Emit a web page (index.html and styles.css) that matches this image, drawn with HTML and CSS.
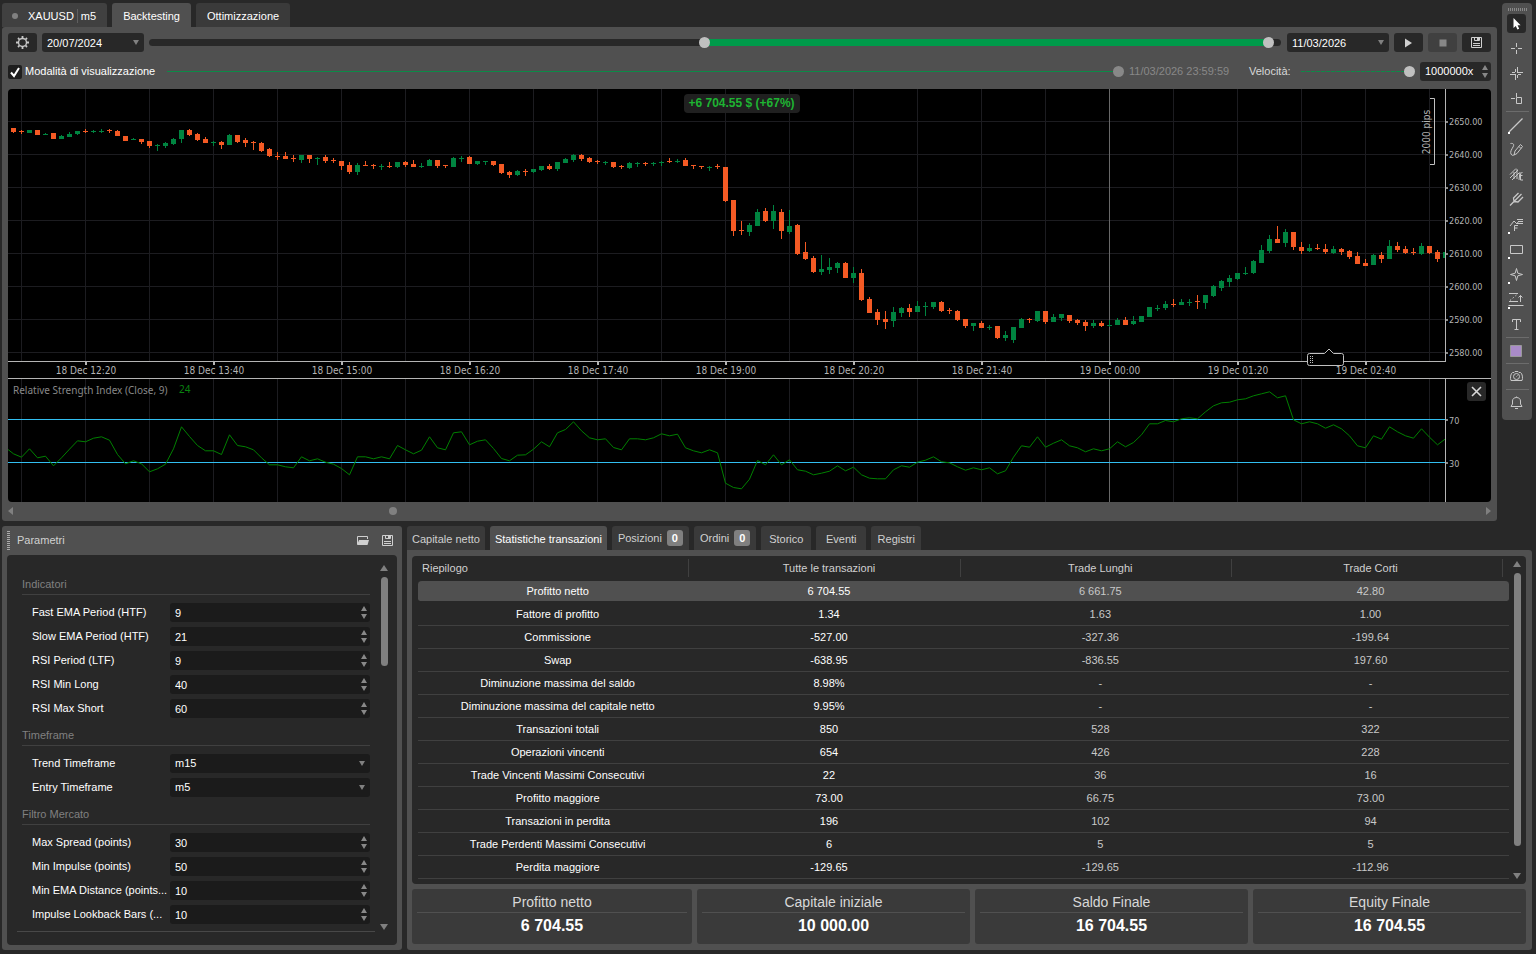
FILE: index.html
```html
<!DOCTYPE html>
<html lang="it">
<head>
<meta charset="utf-8">
<title>XAUUSD m5 - Backtesting</title>
<link rel="stylesheet" href="styles.css">
</head>
<body>
<div class="top">
  <main class="workspace">
    <nav class="tabs tabs-main">
      <button class="tab tab-symbol"><span class="dot"></span><span>XAUUSD</span><span class="bar"></span><span>m5</span></button>
      <button class="tab active">Backtesting</button>
      <button class="tab dim">Ottimizzazione</button>
    </nav>
    <section class="panel chart-panel">
      <div class="row">
        <button class="btn" aria-label="Impostazioni"><svg width="15" height="15" viewBox="0 0 15 15"><circle cx="7.5" cy="7.5" r="4" fill="none" stroke="#c8c8c8" stroke-width="1.4"/><path d="M7.5 1v2M7.5 12v2M1 7.5h2M12 7.5h2M3 3l1.300 1.300M10.700 10.700L12 12M3 12l1.300-1.300M10.700 4.300L12 3" stroke="#c8c8c8" stroke-width="1.800"/></svg></button>
        <span class="select wide-date"><select aria-label="Data iniziale"><option>20/07/2024</option></select></span>
        <div class="range-track">
          <input type="range" min="0" max="1000" value="491" aria-label="Inizio periodo">
          <input type="range" min="0" max="1000" value="994" aria-label="Fine periodo">
        </div>
        <span class="select wide-date"><select aria-label="Data finale"><option>11/03/2026</option></select></span>
        <button class="btn" aria-label="Avvia"><svg width="9" height="10" viewBox="0 0 9 10"><path d="M1 0.500L8 5L1 9.500z" fill="#d0d0d0"/></svg></button>
        <button class="btn off" aria-label="Ferma" disabled><svg width="8" height="8" viewBox="0 0 8 8"><path d="M0.500 0.500h7v7h-7z" fill="#888"/></svg></button>
        <button class="btn" aria-label="Salva"><svg width="11" height="11" viewBox="0 0 11 11"><path d="M.5 .5h10v10h-10zM3.500 .5v3h5v-3M2 6.500h7M2 8.500h7" fill="none" stroke="#d0d0d0"/><path d="M6 1h2v2H6z" fill="#d0d0d0"/></svg></button>
      </div>
      <div class="row row-view">
        <label class="check"><input type="checkbox" checked><svg width="14" height="14" viewBox="0 0 14 14"><path d="M3 7.500l3 3.500L11 3" fill="none" stroke="#fff" stroke-width="2"/></svg><span>Modalità di visualizzazione</span></label>
        <input class="line-range progress" type="range" min="0" max="100" value="100" disabled aria-label="Avanzamento">
        <span class="stamp">11/03/2026 23:59:59</span>
        <label class="speed-label" for="speed">Velocità:</label>
        <input class="line-range dashed" id="speed" type="range" min="0" max="100" value="100">
        <span class="spin speed"><input type="text" value="1000000x" aria-label="Moltiplicatore velocità"><i></i></span>
      </div>
      <div class="chart">
        <svg id="chart" viewBox="8 89 1483 413" role="img" aria-label="Grafico XAUUSD m5"></svg>
        <output class="profit">+6 704.55 $ (+67%)</output>
        <button class="close" aria-label="Chiudi indicatore"><svg width="11" height="11" viewBox="0 0 11 11"><path d="M1 1l9 9M10 1l-9 9" stroke="#d8d8d8" stroke-width="1.600"/></svg></button>
      </div>
      <div class="hscroll"><span class="arrow left"></span><span class="hthumb"></span><span class="arrow right"></span></div>
    </section>
  </main>
  <aside class="tools" id="tools" aria-label="Strumenti">
    <span class="grip-h"></span>
    <button class="tool on" aria-label="Cursore"><svg viewBox="0 0 30 25"><path d="M11.500 7v10l2.300-2 1.600 3.500 1.800-.8-1.600-3.400h3z" fill="#fff"/></svg></button>
    <button class="tool" aria-label="Croce"><svg viewBox="0 0 30 25"><path d="M9 12.500h4M16 12.500h4M14.500 7v4M14.500 14v4"/></svg></button>
    <button class="tool" aria-label="Croce sincronizzata"><svg viewBox="0 0 30 25"><path d="M8 13.500h5M16 11.500h5M13.500 13v6M15.500 6v6M10 11.500h3M16 13.500h3M13.500 8v3M15.500 14v3"/></svg></button>
    <button class="tool" aria-label="Misura"><svg viewBox="0 0 30 25"><path d="M9 12.500h4M14.500 7v4M14.500 11.500h5v6h-5z"/></svg></button>
    <hr>
    <button class="tool more" aria-label="Linea"><svg viewBox="0 0 30 25"><path d="M7 20L20.500 6.500" stroke-width="1.300"/></svg></button>
    <button class="tool" aria-label="Matita"><svg viewBox="0 0 30 25"><path d="M8.500 6.500c3-.5 4 1 2.500 3.500s-3 5-2 7 2.500 1.500 3.500.5M12 18l1-4 5.500-6.500 2 2L15 16.500zM17 9.500l2 2"/></svg></button>
    <button class="tool" aria-label="Disegni"><svg viewBox="0 0 30 25"><path d="M8 16l8-8M8 12.500l6-6M10 18l7-7M12 10v7M15 7v10M18 10l-1 8M17.500 13.500h3M20.500 10.500c-1.500 0-2 1-2 2.500v5h2.500"/></svg></button>
    <button class="tool bold" aria-label="Forcone"><svg viewBox="0 0 30 25"><path d="M8 18.500L19.500 7M12 14.500l-.5-3.500 5-5M12 14.500l4 .5 5-5"/></svg></button>
    <button class="tool more" aria-label="Fibonacci"><svg viewBox="0 0 30 25"><path d="M8 14l4-5 3 3 1-2M15 7.500h6M16 9.500h5M15 11.500h6M12.500 19v-5.500h3.500M12.500 16h3"/></svg></button>
    <button class="tool more" aria-label="Rettangolo"><svg viewBox="0 0 30 25"><path d="M8.500 8.500h12v8h-12z"/></svg></button>
    <button class="tool more" aria-label="Icona"><svg viewBox="0 0 30 25"><path d="M14.500 6.500l1.300 4.700 4.700 1.300-4.700 1.300-1.300 4.700-1.300-4.700-4.700-1.300 4.700-1.300z"/></svg></button>
    <button class="tool more" aria-label="Posizione"><svg viewBox="0 0 30 25"><path d="M7 6.500h9M7 14.500h9M6.500 18.500h15M18.500 15V8.500M16.500 10.500l2-2 2 2"/><path d="M8 13.500l7-6" stroke-dasharray="1.500 2"/></svg></button>
    <button class="tool" aria-label="Testo"><svg viewBox="0 0 30 25"><path d="M10.500 10V7.500h8V10M14.500 7.500v10M12.500 17.500h4"/></svg></button>
    <hr>
    <button class="tool" aria-label="Colore"><svg viewBox="0 0 30 25"><path d="M8.500 7.500h11v11h-11z" fill="#a98bc8" stroke="#999"/></svg></button>
    <hr>
    <button class="tool" aria-label="Istantanea"><svg viewBox="0 0 30 25"><path d="M10.500 8.500h1.500l1-1h3l1 1h1.500c2 1 2.500 6 1.500 8h-11c-1-2-.5-7 1.500-8z"/><circle cx="14.500" cy="12.500" r="3"/><path d="M14.500 12.500l1-1"/></svg></button>
    <hr>
    <button class="tool" aria-label="Avvisi"><svg viewBox="0 0 30 25"><path d="M9 16.500h11l-1.500-2.500v-3c0-2-1.500-3.500-4-3.500s-4 1.500-4 3.500v3zM14.500 7.500v-1M13 18.500h3"/></svg></button>
  </aside>
</div>

<div class="bottom">
  <section class="panel params">
    <header class="params-head"><span class="grip-v"></span><h2>Parametri</h2>
      <button class="plain" aria-label="Apri"><svg width="12" height="9" viewBox="0 0 12 9"><path d="M.5 8V.5h10V3" fill="none" stroke="#d0d0d0"/><path d="M2 4h10l-1.500 5H0z" fill="#d0d0d0"/></svg></button>
      <button class="plain" aria-label="Salva parametri"><svg width="11" height="11" viewBox="0 0 11 11"><path d="M.5 .5h10v10h-10zM3.500 .5v3h5v-3M2 6.500h7M2 8.500h7" fill="none" stroke="#d0d0d0"/><path d="M6 1h2v2H6z" fill="#d0d0d0"/></svg></button>
    </header>
    <div class="inset params-body">
      <form class="fields">
        <h3>Indicatori</h3>
        <div class="field"><label for="p1">Fast EMA Period (HTF)</label><span class="spin"><input id="p1" type="number" value="9"><i></i></span></div>
        <div class="field"><label for="p2">Slow EMA Period (HTF)</label><span class="spin"><input id="p2" type="number" value="21"><i></i></span></div>
        <div class="field"><label for="p3">RSI Period (LTF)</label><span class="spin"><input id="p3" type="number" value="9"><i></i></span></div>
        <div class="field"><label for="p4">RSI Min Long</label><span class="spin"><input id="p4" type="number" value="40"><i></i></span></div>
        <div class="field"><label for="p5">RSI Max Short</label><span class="spin"><input id="p5" type="number" value="60"><i></i></span></div>
        <h3>Timeframe</h3>
        <div class="field"><label for="p6">Trend Timeframe</label><span class="select"><select id="p6"><option>m15</option></select></span></div>
        <div class="field"><label for="p7">Entry Timeframe</label><span class="select"><select id="p7"><option>m5</option></select></span></div>
        <h3>Filtro Mercato</h3>
        <div class="field"><label for="p8">Max Spread (points)</label><span class="spin"><input id="p8" type="number" value="30"><i></i></span></div>
        <div class="field"><label for="p9">Min Impulse (points)</label><span class="spin"><input id="p9" type="number" value="50"><i></i></span></div>
        <div class="field"><label for="p10">Min EMA Distance (points...</label><span class="spin"><input id="p10" type="number" value="10"><i></i></span></div>
        <div class="field"><label for="p11">Impulse Lookback Bars (...</label><span class="spin"><input id="p11" type="number" value="10"><i></i></span></div>
      </form>
      <div class="vscroll"><span class="arrow up"></span><span class="vtrack"><b class="short"></b></span><span class="arrow down"></span></div>
    </div>
  </section>

  <section class="results">
    <nav class="tabs tabs-results">
      <button class="tab dim">Capitale netto</button>
      <button class="tab active">Statistiche transazioni</button>
      <button class="tab dim counted">Posizioni<span class="count">0</span></button>
      <button class="tab dim counted">Ordini<span class="count">0</span></button>
      <button class="tab dim">Storico</button>
      <button class="tab dim">Eventi</button>
      <button class="tab dim">Registri</button>
    </nav>
    <div class="panel results-body">
      <div class="inset table-box">
        <table>
          <thead><tr><th>Riepilogo</th><th>Tutte le transazioni</th><th>Trade Lunghi</th><th>Trade Corti</th></tr></thead>
          <tbody>
            <tr class="selected"><td>Profitto netto</td><td>6 704.55</td><td>6 661.75</td><td>42.80</td></tr>
            <tr><td>Fattore di profitto</td><td>1.34</td><td>1.63</td><td>1.00</td></tr>
            <tr><td>Commissione</td><td>-527.00</td><td>-327.36</td><td>-199.64</td></tr>
            <tr><td>Swap</td><td>-638.95</td><td>-836.55</td><td>197.60</td></tr>
            <tr><td>Diminuzione massima del saldo</td><td>8.98%</td><td>-</td><td>-</td></tr>
            <tr><td>Diminuzione massima del capitale netto</td><td>9.95%</td><td>-</td><td>-</td></tr>
            <tr><td>Transazioni totali</td><td>850</td><td>528</td><td>322</td></tr>
            <tr><td>Operazioni vincenti</td><td>654</td><td>426</td><td>228</td></tr>
            <tr><td>Trade Vincenti Massimi Consecutivi</td><td>22</td><td>36</td><td>16</td></tr>
            <tr><td>Profitto maggiore</td><td>73.00</td><td>66.75</td><td>73.00</td></tr>
            <tr><td>Transazioni in perdita</td><td>196</td><td>102</td><td>94</td></tr>
            <tr><td>Trade Perdenti Massimi Consecutivi</td><td>6</td><td>5</td><td>5</td></tr>
            <tr><td>Perdita maggiore</td><td>-129.65</td><td>-129.65</td><td>-112.96</td></tr>
          </tbody>
        </table>
        <div class="vscroll"><span class="arrow up"></span><span class="vtrack"><b class="long"></b></span><span class="arrow down"></span></div>
      </div>
      <div class="cards">
        <article><h4>Profitto netto</h4><p>6 704.55</p></article>
        <article><h4>Capitale iniziale</h4><p>10 000.00</p></article>
        <article><h4>Saldo Finale</h4><p>16 704.55</p></article>
        <article><h4>Equity Finale</h4><p>16 704.55</p></article>
      </div>
    </div>
  </section>
</div>
<script src="chart.js"></script>
</body>
</html>
```

FILE: styles.css
```css
* { box-sizing: border-box; }
body {
  margin: 0;
  min-height: 100vh;
  display: flex;
  flex-direction: column;
  gap: 5px;
  padding: 3px 4px 4px 2px;
  background: #282828;
  color: #fff;
  font-family: "Liberation Sans", Arial, sans-serif;
  font-size: 11px;
}
button, input, select { font: inherit; color: inherit; border: 0; margin: 0; padding: 0; background: none; }
button { display: flex; align-items: center; justify-content: center; }
h2, h3, h4, p { margin: 0; font-weight: normal; }

.top { display: flex; align-items: flex-start; gap: 5px; }
.workspace { flex: 1; min-width: 0; }
.panel { background: #505050; border-radius: 3px; }

.tabs { display: flex; gap: 5px; }
.tab { height: 24px; padding: 1px 5px 0; background: #404040; border-radius: 3px 3px 0 0; white-space: nowrap; }
.tab.dim { background: #3a3a3a; }
.tab.active { background: #505050; color: #fff; }
.tab.counted { padding: 0 6px; }
.tabs-main .tab { padding: 2px 11px 0; }
.tabs-main .tab-symbol { padding-left: 10px; gap: 3px; }
.dot { width: 6px; height: 6px; margin-right: 7px; border-radius: 3px; background: #808080; }
.bar { width: 1px; height: 14px; background: #606060; }
.tabs-results .tab { min-width: 50px; color: #d0d0d0; }
.tabs-results .tab.active { color: #fff; }
.count { min-width: 16px; margin-left: 5px; line-height: 16px; border-radius: 3px; background: #808080; color: #fff; font-weight: bold; }

.chart-panel { padding: 6px 6px 0; }
.row { display: flex; align-items: center; gap: 5px; height: 19px; }
.row-view { margin: 10px 0 8px; gap: 0; }
.btn { width: 29px; height: 19px; border-radius: 3px; background: #282828; }
.btn.off { background: #404040; }
.select, .spin { position: relative; display: flex; height: 19px; border-radius: 3px; background: #1b1b1b; }
.select select { appearance: none; width: 100%; padding: 0 14px 0 5px; outline: 0; }
.field .select select { padding-bottom: 2px; }
.select::after {
  content: "";
  position: absolute;
  right: 5px;
  top: 7px;
  border: solid transparent;
  border-width: 5px 3px 0;
  border-top-color: #808080;
  pointer-events: none;
}
.wide-date { width: 102px; background: #282828; }
.spin input { width: 100%; padding: 1px 14px 0 5px; outline: 0; appearance: textfield; }
.spin input::-webkit-inner-spin-button { appearance: none; }
.spin i { position: absolute; right: 4px; top: 3px; width: 5px; height: 13px; pointer-events: none; }
.spin i::before, .spin i::after { content: ""; display: block; border: solid transparent; border-width: 0 3px 5px; border-bottom-color: #888; }
.spin i::after { margin-top: 3px; border-width: 5px 3px 0; border-top-color: #888; }
.spin.speed { width: 71px; margin-left: 5px; background: #282828; }
.spin.speed input { padding: 0 14px 1px 5px; }

.range-track {
  position: relative;
  flex: 1;
  height: 7px;
  margin-right: 1px;
  border-radius: 4px;
  background: linear-gradient(90deg, #282828 49%, #009a4a 49%, #009a4a 99%, #282828 99%);
}
.range-track input { position: absolute; left: 0; top: -2px; width: 100%; height: 11px; appearance: none; pointer-events: none; }
input[type="range"] { appearance: none; background: none; outline: 0; }
input[type="range"]::-webkit-slider-thumb { appearance: none; width: 11px; height: 11px; border-radius: 6px; background: #c0c0c0; pointer-events: auto; }
input.line-range { height: 11px; background: linear-gradient(#0c8a48, #0c8a48) center / 100% 1px no-repeat; }
input.progress { flex: 1; margin: 0 5px 0 12px; }
input.progress::-webkit-slider-thumb { background: #888; }
input.dashed { width: 114px; margin-left: 11px; background: repeating-linear-gradient(90deg, #0c8a48 0 4px, #505050 4px 5px) center / 100% 1px no-repeat; }
.check { display: flex; align-items: center; gap: 3px; }
.check input { position: absolute; opacity: 0; }
.check svg { background: #1e1e1e; border-radius: 2px; }
.check span, .stamp, .speed-label { padding-bottom: 2px; }
.stamp { width: 98px; color: #888; white-space: nowrap; }
.speed-label { width: 41px; margin-left: 22px; color: #d8d8d8; }

.chart { position: relative; overflow: hidden; border-radius: 4px; background: #000; }
.chart > svg { display: block; width: 100%; height: auto; }
.profit { position: absolute; left: 50%; top: 5px; margin-left: -66px; padding: 0 5px; line-height: 19px; border-radius: 4px; background: #202020; color: #1eb432; font-size: 12px; font-weight: bold; white-space: nowrap; }
.close { position: absolute; right: 5px; top: 71%; width: 19px; height: 19px; border-radius: 3px; background: #282828; }
.axis-text { fill: #b4b4b4; font-family: "DejaVu Sans Condensed", "DejaVu Sans", sans-serif; font-size: 10px; }
.axis-text.price { font-size: 9px; }
.axis-text.name { fill: #888; font-family: "Noto Sans", sans-serif; }
.axis-text.value { fill: #0a8210; font-family: "Noto Sans", sans-serif; }

.hscroll { display: flex; align-items: center; height: 19px; padding-bottom: 2px; }
.hthumb { width: 8px; height: 8px; margin-left: calc(25% + 5px); margin-right: auto; border-radius: 4px; background: #808080; }
.arrow { border: solid transparent; border-width: 4px; }
.arrow.left { border-left-width: 0; border-right: 5px solid #808080; }
.arrow.right { border-right-width: 0; border-left: 5px solid #808080; }
.arrow.up { border-top-width: 0; border-bottom: 6px solid #808080; }
.arrow.down { border-bottom-width: 0; border-top: 6px solid #808080; }

.tools { display: flex; flex-direction: column; width: 30px; padding: 5px 0; border-radius: 4px; background: #505050; }
.tools hr { width: 23px; height: 1px; margin: 0 auto; border: 0; background: #6c6c6c; }
.grip-h { width: 19px; height: 3px; margin: 0 auto; background: repeating-linear-gradient(90deg, #888 0 1px, transparent 1px 2px); }
.tool { position: relative; width: 30px; height: 25px; }
.tool svg { position: relative; width: 30px; height: 25px; fill: none; stroke: #c8c8c8; }
.tool.bold svg { stroke-width: 1.3; }
.tool.on svg { stroke: none; }
.tool.on::before { content: ""; position: absolute; left: 5px; top: 3px; width: 19px; height: 19px; border-radius: 3px; background: #282828; }
.tool.more::after { content: ""; position: absolute; left: 6px; bottom: 3px; width: 2px; height: 2px; background: #fff; }

.bottom { flex: 1; display: flex; gap: 5px; }
.inset { background: #282828; border-radius: 4px; }
.params { display: flex; flex-direction: column; width: 400px; padding: 0 5px 5px; }
.params-head { display: flex; align-items: center; height: 29px; }
.params-head h2 { flex: 1; padding-bottom: 2px; color: #d0d0d0; font-size: 11px; }
.grip-v { width: 3px; height: 19px; margin-right: 7px; background: repeating-linear-gradient(#aaa 0 1px, #505050 1px 2px); }
.plain { width: 24px; height: 24px; }
.params-head .plain:last-child { margin-right: -2px; }
.params-body { flex: 1; display: flex; justify-content: space-between; padding: 9px 9px 13px 10px; }
.fields { flex: 1; padding: 0 5px; border-bottom: 1px solid #484848; }
.fields h3 { height: 31px; margin-bottom: 8px; padding-top: 15px; line-height: 11px; color: #808080; font-size: 11px; border-bottom: 1px solid #404040; }
.fields .field + h3 { height: 23px; padding-top: 7px; }
.field { display: flex; align-items: center; height: 19px; margin-bottom: 5px; padding-left: 10px; }
.field label { width: 138px; padding-bottom: 2px; white-space: nowrap; }
.field .select, .field .spin { flex: 1; }
.vscroll { display: flex; flex-direction: column; align-items: center; gap: 6px; width: 8px; margin-left: 5px; }
.params-body .vscroll { padding: 1px 0 2px; }
.vtrack { flex: 1; width: 7px; }
.vtrack b { display: block; border-radius: 4px; background: #808080; }
.vtrack .short { height: 26%; }
.vtrack .long { height: 93%; }

.results { flex: 1; display: flex; flex-direction: column; min-width: 0; }
.results-body { flex: 1; display: flex; flex-direction: column; gap: 5px; padding: 6px 6px 6px 5px; border-top-left-radius: 0; }
.table-box { flex: 1; display: flex; padding: 0 5px 5px 6px; }
table { width: 100%; border-collapse: separate; border-spacing: 0; table-layout: fixed; align-self: flex-start; }
th, td { height: 23px; padding: 0 0 0 8px; font-weight: normal; text-align: center; color: #c8c8c8; border-bottom: 1px solid #404040; }
td:nth-child(-n+2) { color: #fff; }
td:last-child, th:last-child { padding-left: 0; }
th { height: 24px; border: 0; color: #d0d0d0; background: linear-gradient(#404040, #404040) right center / 1px 18px no-repeat; }
th:first-child { padding-left: 4px; text-align: left; }
th:last-child { width: 277px; background-position: right 6px center; }
.selected td { border-top: 1px solid #282828; border-bottom: 2px solid #282828; background: #505050; }
.selected td:first-child { border-radius: 4px 0 0 4px; }
.selected td:last-child { border-radius: 0 4px 4px 0; }
.table-box .vscroll { flex: none; padding-top: 5px; margin-left: 4px; }
.cards { display: grid; grid-template-columns: 280fr 273fr 273fr 273fr; gap: 5px; }
.cards article { height: 55px; padding: 3px 5px 0; text-align: center; background: #3a3a3a; border-radius: 3px; }
.cards h4 { height: 21px; line-height: 20px; font-size: 14px; color: #d8d8d8; border-bottom: 1px solid #505050; }
.cards p { line-height: 25px; font-size: 16px; font-weight: bold; }
```

FILE: chart.js
```js
// Candles: direction, high, body top, body bottom, low, in thirds of a pixel below the base of each block.
const blocks = [
  [110, `R 54 54 66 69,R 60 63 66 72,G 60 60 69 69,R 60 60 75 75,G 69 72 75 75,R 69 69 87 87,G 75 78 87 87,G 66 72 81 81,G 63 63 72 75,R 57 63 66 69,G 60 63 66 69,G 57 63 66 69,R 57 60 63 69,R 60 63 78 78,R 78 78 93 93,G 84 87 90 90,R 87 87 96 102,R 93 93 108 114,G 102 105 108 123,G 96 99 108 114,G 84 87 102 105,G 60 60 87 99,R 57 60 75 78,R 69 72 90 93,R 81 87 99 99,G 93 96 99 108,R 93 96 105 117,G 72 75 105 105,R 75 75 96 99,R 84 90 99 111,R 93 96 99 120,R 96 99 123 126,R 114 117 138 141,R 126 138 141 150,R 126 138 147 147,R 135 144 147 156,G 135 135 150 159,R 135 135 147 159,G 141 144 147 165,R 135 141 153 159,R 144 150 153 159,R 153 153 168 180,R 156 165 186 192,G 159 165 186 195,R 153 165 168 168,R 162 165 168 177,G 162 168 171 180,R 156 168 171 174,G 156 156 171 174,R 153 156 165 171,R 150 162 171 171,G 159 168 171 174,G 147 150 168 168,R 150 150 168 174,R 165 165 168 174,G 141 144 171 171,G 138 144 147 156,R 138 141 162 162,G 153 153 162 165,G 153 153 156 165,R 153 153 165 168`],
  [90, `R 222 222 249 252,R 243 246 255 264,G 240 243 255 258,R 237 243 246 258,G 237 237 246 249,G 228 228 240 243,R 222 228 237 240,G 216 216 237 243,G 204 207 219 219,G 192 195 210 216,R 192 195 207 213,R 201 204 216 219,R 210 213 216 222,G 213 216 219 225,R 216 216 231 234,R 225 228 231 237,G 216 219 234 237,G 216 219 222 231,R 216 219 222 228,G 216 219 222 228,G 213 216 219 228,R 204 213 216 219,G 207 213 216 219,R 204 210 228 228,R 225 225 228 237,R 228 228 231 237,G 228 231 234 243,R 222 228 231 237,R 231 231 333 336,R 330 330 423 438,R 393 420 423 435,G 399 405 426 438,G 357 366 408 408,R 354 363 393 396,G 345 363 393 417,R 357 366 423 447,G 360 408 426 432,R 402 405 492 495,R 456 486 507 510,R 498 504 546 549,G 495 537 546 555,G 504 531 540 552,G 516 519 534 549,R 516 519 564 564,G 531 549 564 579,R 537 549 630 633,R 621 627 669 669,R 657 666 690 705,R 663 687 696 717,G 651 666 693 711,G 651 654 669 681,R 642 654 666 681,G 633 648 666 666,G 636 648 651 678,G 636 636 651 657,R 633 636 663 666,R 654 660 663 672,R 660 663 690 693,R 687 687 708 714,G 699 699 708 723,R 693 699 714 714,G 705 711 714 720,R 708 708 744 747`],
  [200, `G 393 405 414 423,G 381 381 420 429,G 354 357 384 384,R 354 357 360 369,G 333 333 363 366,R 333 333 366 372,G 342 351 366 366,G 342 342 354 363,R 345 345 363 369,R 357 360 369 375,R 360 366 378 393,G 360 369 378 384,R 363 369 378 381,G 360 375 378 381,G 354 360 375 375,R 351 360 375 375,G 348 363 372 375,G 348 348 366 366,G 321 321 351 351,G 315 324 327 333,G 303 312 324 330,R 297 312 315 321,G 297 306 315 315,G 297 306 309 318,R 285 303 306 327,G 285 285 309 327,G 255 258 288 291,G 240 243 264 273,G 225 234 246 261,G 219 219 237 240,G 201 219 222 225,G 180 183 219 222,G 135 150 189 189,G 105 117 153 159,R 78 117 129 129,G 87 96 129 141,R 96 96 141 150,R 126 141 153 162,G 132 144 153 156,R 132 144 147 150,R 132 147 156 162,G 138 147 159 162,R 144 147 156 165,R 150 153 171 177,R 156 168 192 192,R 177 189 198 198,G 162 165 195 195,R 156 165 177 189,G 120 138 177 177,R 126 138 150 156,R 138 147 159 162,R 144 156 159 165,G 129 138 162 165,R 138 138 159 162,R 150 156 177 186,G 156 156 174 174`]
];
// RSI samples, one per candle, in thirds of a pixel below y = 370.
const rsi = [250,260,235,262,257,286,262,236,211,214,203,199,209,252,280,271,280,304,295,281,235,169,198,225,241,241,252,193,225,229,238,262,283,283,289,292,259,271,265,275,281,294,313,259,259,265,259,265,225,238,250,239,199,232,238,187,184,223,212,208,234,264,271,254,253,236,214,229,187,177,154,181,202,208,205,231,238,205,205,208,202,190,196,191,232,241,247,238,247,338,351,355,326,270,283,253,283,268,298,302,313,308,302,286,301,290,313,323,325,325,298,286,290,275,269,259,274,277,289,299,292,298,292,310,301,260,226,230,199,230,218,208,226,232,244,235,241,235,214,229,216,193,160,160,150,154,145,142,145,124,106,97,95,88,85,76,70,64,82,76,148,160,154,160,173,163,175,196,226,232,196,206,169,184,196,203,175,200,223,205];

const out = [];
const rect = (x, y, w, h, fill) => out.push(`<rect x="${x}" y="${y}" width="${w}" height="${h}" fill="${fill}"/>`);
const label = (x, y, text, cls = "", extra = "") => out.push(`<text x="${x}" y="${y}" class="axis-text ${cls}" ${extra}>${text}</text>`);

// Grid
for (let y = 121; y <= 352; y += 33) rect(8, y, 1437, 1, "#1c1c20");
for (let x = 21; x < 1445; x += 64) {
  const c = x === 1109 ? "#686868" : "#1c1c20";
  rect(x, 89, 1, 272, c);
  rect(x, 379, 1, 123, c);
}

// Candles
let x = 13;
for (const [base, rows] of blocks) {
  for (const row of rows.split(",")) {
    const [dir, ...v] = row.split(" ");
    const [hi, top, bottom, lo] = v.map(n => base + Math.round(n / 3));
    const color = dir === "R" ? "#f45a24" : "#008440";
    rect(x, hi, 1, lo - hi, color);
    rect(x - 2, top, Math.min(5, 1445 - x + 2), bottom - top, color);
    x += 8;
  }
}

// RSI pane
rect(8, 419, 1437, 1, "#32bef0");
rect(8, 462, 1437, 1, "#32bef0");
const points = ["8,449.500"].concat(rsi.map((v, k) => `${13.5 + 8 * k},${(370.5 + v / 3).toFixed(1)}`));
out.push(`<polyline points="${points.join(" ")}" fill="none" stroke="#008000" stroke-width="1"/>`);
label(13, 394, "Relative Strength Index (Close, 9)", "name");
label(179, 393, "24", "value");

// Axes
rect(8, 361, 1438, 1, "#b4b4b4");
rect(8, 378, 1483, 1, "#b4b4b4");
rect(1445, 89, 1, 272, "#b4b4b4");
rect(1445, 379, 1, 123, "#b4b4b4");
["18 Dec 12:20", "18 Dec 13:40", "18 Dec 15:00", "18 Dec 16:20", "18 Dec 17:40", "18 Dec 19:00", "18 Dec 20:20", "18 Dec 21:40", "19 Dec 00:00", "19 Dec 01:20", "19 Dec 02:40"].forEach((t, i) => {
  rect(85 + 128 * i, 362, 2, 3, "#b4b4b4");
  label(86 + 128 * i, 374, t, "", 'text-anchor="middle"');
});
for (let i = 0; i < 8; i++) {
  rect(1446, 121 + 33 * i, 2, 2, "#888");
  label(1449, 125 + 33 * i, (2650 - 10 * i) + ".00", "price");
}
rect(1446, 419, 2, 2, "#888");
rect(1446, 462, 2, 2, "#888");
label(1449, 424, "70", "price");
label(1449, 467, "30", "price");

// Pip scale
out.push('<path d="M1430 98.500h4.500v66h-4.500" fill="none" stroke="#c0c0c0"/>');
label(0, 0, "2000 pips", "", 'text-anchor="middle" transform="translate(1430 132) rotate(-90)"');

// Time axis handle
out.push('<path d="M1309.500 353.500h15l4.500-4.500 4.500 4.500h8q2 0 2 2v8q0 2-2 2h-32q-2 0-2-2v-8q0-2 2-2z" fill="#000" stroke="#c0c0c0"/>');
for (let gy = 356; gy < 364; gy += 2) { rect(1310, gy, 1, 1, "#c0c0c0"); rect(1312, gy, 1, 1, "#c0c0c0"); }

document.getElementById("chart").innerHTML = out.join("");
```
